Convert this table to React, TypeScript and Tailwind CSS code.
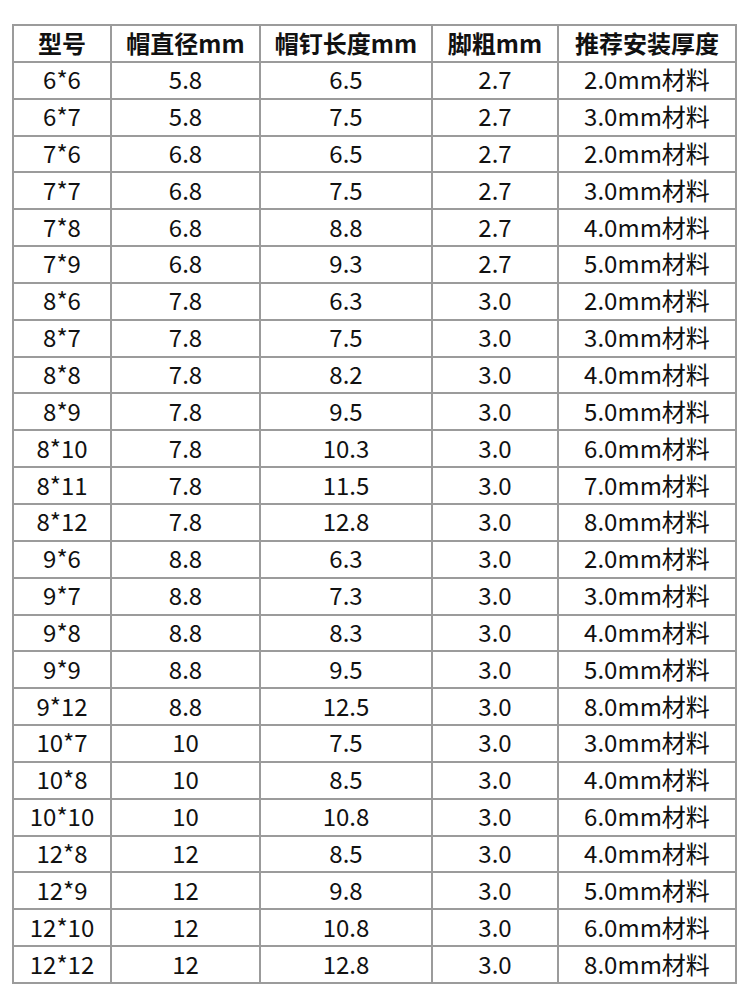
import React from "react";

const header = ["型号", "帽直径mm", "帽钉长度mm", "脚粗mm", "推荐安装厚度"];
const rows: string[][] = [
  ["6*6", "5.8", "6.5", "2.7", "2.0mm材料"],
  ["6*7", "5.8", "7.5", "2.7", "3.0mm材料"],
  ["7*6", "6.8", "6.5", "2.7", "2.0mm材料"],
  ["7*7", "6.8", "7.5", "2.7", "3.0mm材料"],
  ["7*8", "6.8", "8.8", "2.7", "4.0mm材料"],
  ["7*9", "6.8", "9.3", "2.7", "5.0mm材料"],
  ["8*6", "7.8", "6.3", "3.0", "2.0mm材料"],
  ["8*7", "7.8", "7.5", "3.0", "3.0mm材料"],
  ["8*8", "7.8", "8.2", "3.0", "4.0mm材料"],
  ["8*9", "7.8", "9.5", "3.0", "5.0mm材料"],
  ["8*10", "7.8", "10.3", "3.0", "6.0mm材料"],
  ["8*11", "7.8", "11.5", "3.0", "7.0mm材料"],
  ["8*12", "7.8", "12.8", "3.0", "8.0mm材料"],
  ["9*6", "8.8", "6.3", "3.0", "2.0mm材料"],
  ["9*7", "8.8", "7.3", "3.0", "3.0mm材料"],
  ["9*8", "8.8", "8.3", "3.0", "4.0mm材料"],
  ["9*9", "8.8", "9.5", "3.0", "5.0mm材料"],
  ["9*12", "8.8", "12.5", "3.0", "8.0mm材料"],
  ["10*7", "10", "7.5", "3.0", "3.0mm材料"],
  ["10*8", "10", "8.5", "3.0", "4.0mm材料"],
  ["10*10", "10", "10.8", "3.0", "6.0mm材料"],
  ["12*8", "12", "8.5", "3.0", "4.0mm材料"],
  ["12*9", "12", "9.8", "3.0", "5.0mm材料"],
  ["12*10", "12", "10.8", "3.0", "6.0mm材料"],
  ["12*12", "12", "12.8", "3.0", "8.0mm材料"],
];

export default function App() {
  return (
    <div
      className="w-[750px] h-[1005px] bg-white pt-[24px] pl-[12px]"
      style={{ fontFamily: '"Noto Sans CJK SC", "Noto Sans", sans-serif' }}
    >
      <div className="w-[725px] h-[960px] bg-[#9b9b9b] p-[2px] grid grid-cols-[96px_147px_170px_124px_176px] grid-rows-[repeat(26,1fr)] gap-[2px]">
        {header.map((h, i) => (
          <div
            key={"h" + i}
            className="bg-white flex items-center justify-center text-[24px] font-bold text-[#111] leading-none"
          >
            {h}
          </div>
        ))}
        {rows.map((r, ri) =>
          r.map((c, ci) => (
            <div
              key={ri + "-" + ci}
              className="bg-white flex items-center justify-center text-[24px] text-[#111] leading-none pb-[2px]"
            >
              {c}
            </div>
          ))
        )}
      </div>
    </div>
  );
}
